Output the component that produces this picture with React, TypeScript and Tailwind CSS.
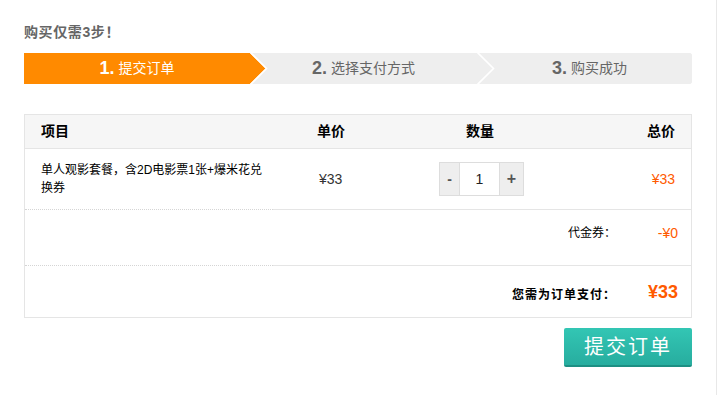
import React from 'react';

const font = { fontFamily: '"Liberation Sans", "Noto Sans CJK SC", sans-serif' };

const steps = [
  { n: '1.', label: '提交订单', active: true },
  { n: '2.', label: '选择支付方式', active: false },
  { n: '3.', label: '购买成功', active: false },
];

function Arrow({ color }: { color: string }) {
  return (
    <svg className="absolute top-0 left-full z-10" width="18" height="31" viewBox="0 0 18 31">
      <polygon points="0,0 15.5,15.5 0,31" fill={color} />
      <polyline points="0,-1 16.5,15.5 0,32" fill="none" stroke="#ffffff" strokeWidth="1.6" />
    </svg>
  );
}

function StepBar() {
  return (
    <div className="flex h-[31px] w-[668px] overflow-hidden rounded-r-[3px] bg-[#eeeeee]">
      {steps.map((s, i) => (
        <div
          key={i}
          className={
            'relative flex h-full items-center justify-center ' +
            (i === 0 ? 'w-[226px] bg-[#ff8a00] text-white' : i === 1 ? 'w-[227px] bg-[#eeeeee] text-[#666]' : 'flex-1 bg-[#eeeeee] pl-[10px] text-[#666]')
          }
        >
          <span className="mr-[4px] text-[18px] font-bold">{s.n}</span>
          <span className="text-[14px]">{s.label}</span>
          {i < 2 && <Arrow color={s.active ? '#ff8a00' : '#eeeeee'} />}
        </div>
      ))}
    </div>
  );
}

function QtyControl() {
  return (
    <div className="flex h-[34px] border border-[#dddddd]">
      <button className="flex w-[19px] items-center justify-center bg-[#eeeeee] text-[14px] font-bold text-[#555]">-</button>
      <div className="flex w-[41px] items-center justify-center border-x border-[#dddddd] bg-white text-[14px] text-[#222]">1</div>
      <button className="flex w-[23px] items-center justify-center bg-[#eeeeee] text-[16px] font-bold text-[#555]">+</button>
    </div>
  );
}

export default function App() {
  return (
    <div className="h-[395px] w-[717px] border-r border-[#e8e8e8] bg-white pl-[24px]" style={font}>
      <div className="pt-[22px] pb-[11px] text-[14px] font-bold leading-[20px] tracking-[0.6px] text-[#666]">购买仅需3步！</div>
      <StepBar />

      <div className="mt-[30px] w-[668px] border border-[#e5e5e5] text-black">
        <div className="flex h-[34px] items-center border-b border-[#e5e5e5] bg-[#f6f6f6] text-[14px] font-bold">
          <div className="w-[248px] pl-[16px]">项目</div>
          <div className="w-[127px] pl-[44px]">单价</div>
          <div className="w-[160px] text-center">数量</div>
          <div className="flex-1 pr-[16px] text-right">总价</div>
        </div>

        <div className="flex h-[61px]">
          <div className="flex w-[248px] items-center border-b border-dotted border-[#d5d5d5] pl-[16px] pr-[8px] text-[12px] leading-[18px]">
            单人观影套餐，含2D电影票1张+爆米花兑换券
          </div>
          <div className="flex flex-1 items-center border-b border-[#e5e5e5]">
            <div className="w-[127px] pl-[46px] text-[14px] text-[#333]">¥33</div>
            <div className="flex w-[160px] justify-center pl-[3px]">
              <QtyControl />
            </div>
            <div className="flex-1 pr-[16px] text-right text-[14px] text-[#ff5a00]">¥33</div>
          </div>
        </div>

        <div className="flex h-[56px]">
          <div className="w-[248px] border-b border-dotted border-[#d5d5d5]" />
          <div className="flex flex-1 items-start justify-end border-b border-[#e5e5e5] pt-[13px] text-[12px] leading-[20px]">
            <span className="mr-[6px]">代金券：</span>
            <span className="w-[69px] pr-[13px] text-right text-[14px] text-[#ff5a00]">-¥0</span>
          </div>
        </div>

        <div className="flex h-[51px] items-start justify-end pt-[16px]">
          <span className="mr-[6px] mt-[3px] text-[12px] font-bold leading-[20px] tracking-[1px]">您需为订单支付：</span>
          <span className="w-[69px] pr-[13px] text-right text-[18px] font-bold leading-[20px] text-[#ff5a00]">¥33</span>
        </div>
      </div>

      <div className="flex w-[668px] justify-end pt-[10px]">
        <button className="h-[39px] w-[128px] rounded-[2px] border-b-2 border-[#1d8f83] bg-gradient-to-b from-[#33c6b4] to-[#27ad9f] text-[20px] tracking-[2px] text-white">
          提交订单
        </button>
      </div>
    </div>
  );
}
